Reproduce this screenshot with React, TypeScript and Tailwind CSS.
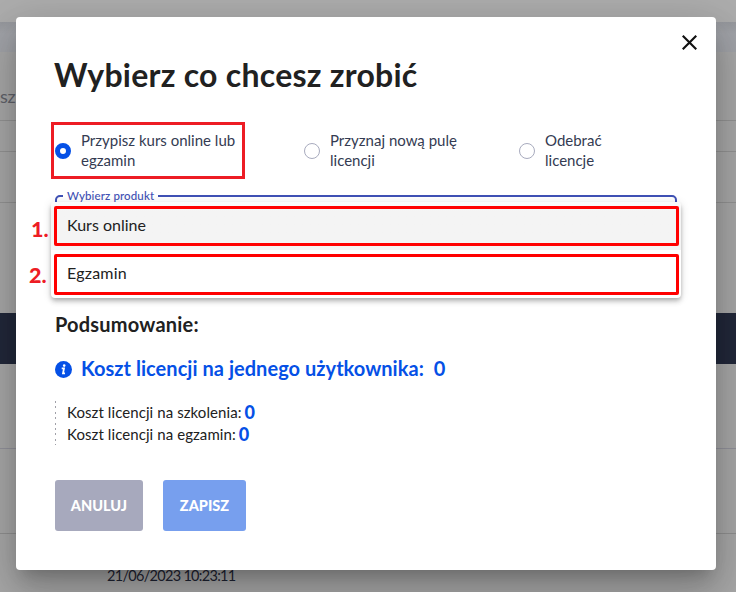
import React, { useState } from 'react'

const options = [
  { id: 'assign', lines: ['Przypisz kurs online lub', 'egzamin'], width: 'w-[249px]' },
  { id: 'grant', lines: ['Przyznaj nową pulę', 'licencji'], width: 'w-[215px]' },
  { id: 'revoke', lines: ['Odebrać', 'licencje'], width: 'w-[120px]' },
]

function Background() {
  return (
    <div className="h-full w-full overflow-hidden bg-[#a8a8a8] text-[#1f2433]">
      <div className="h-[22px] bg-[#adadad]" />
      <div className="h-[30px] bg-linear-to-b from-[#97999e] to-[#a2a4a9] to-40%" />
      <div className="flex h-[69px] items-end border-b border-[#939393] pb-[14px]">
        <span className="text-[18px] leading-5 tracking-[-0.3px] text-[#60626a]">sz</span>
      </div>
      <div className="h-[31px] border-b border-[#939393]" />
      <div className="h-[51px] border-b border-[#939393]" />
      <div className="h-[110px]" />
      <div className="h-[51px] bg-[#22283a]" />
      <div className="h-[85px] border-b border-[#92929b]" />
      <div className="h-[85px] border-b border-[#909090]" />
      <div className="pl-[107px] pt-[32px] text-[14.5px] leading-5 tracking-[-0.7px]">21/06/2023 10:23:11</div>
    </div>
  )
}

function ProductMenu() {
  return (
    <div className="absolute left-[35px] top-[185px] flex h-24 w-[630px] flex-col rounded bg-white shadow-[0_2px_4px_-1px_rgba(0,0,0,0.2),0_4px_5px_0_rgba(0,0,0,0.14),0_1px_10px_0_rgba(0,0,0,0.12)]">
      <div className="flex h-12 rounded-t bg-linear-to-b from-[#fafafa] to-[#f4f4f4] to-20% pb-1 pl-[3px] pr-[2px] pt-1">
        <div className="flex flex-1 items-center rounded-[2px] border-3 border-[#ff0000] pb-[2px] pl-[10px] text-base">Kurs online</div>
      </div>
      <div className="flex h-12 pb-[3px] pl-[3px] pr-[2px] pt-1">
        <div className="flex flex-1 items-center rounded-[2px] border-3 border-[#ff0000] pb-[3px] pl-[10px] text-base">
          <span className="tracking-[0.2px]">Egzamin</span>
        </div>
      </div>
      <span className="absolute -left-[20px] top-[13px] text-[21.5px] font-black leading-7 text-[#ed1c24]">1.</span>
      <span className="absolute -left-[22px] top-[59px] text-[21.5px] font-black leading-7 text-[#ed1c24]">2.</span>
    </div>
  )
}

function App() {
  const [selected, setSelected] = useState('assign')

  return (
    <div className="relative h-[592px] w-[736px] overflow-hidden font-[Lato,sans-serif]">
      <Background />

      <div className="absolute left-4 top-[17px] flex h-[553px] w-[700px] flex-col rounded bg-white px-[39px] pt-[38px] text-[#212121] shadow-[0_11px_15px_-7px_rgba(0,0,0,0.2),0_24px_38px_3px_rgba(0,0,0,0.14),0_9px_46px_8px_rgba(0,0,0,0.12)]">
        <button className="absolute right-[19px] top-[18px]">
          <svg width="15" height="15" viewBox="0 0 14 14" stroke="#111" strokeWidth="2" fill="none">
            <path d="M0.7 0.7 13.3 13.3M13.3 0.7 0.7 13.3" />
          </svg>
        </button>

        <h1 className="-ml-px h-10 whitespace-nowrap text-[32px] font-bold leading-10 tracking-[0.25px]">Wybierz co chcesz zrobić</h1>

        <div className="relative mt-[36px] flex h-10">
          {options.map((option) => (
            <button key={option.id} onClick={() => setSelected(option.id)} className={`flex items-center gap-[10px] text-left ${option.width}`}>
              <span className={selected === option.id
                ? 'h-4 w-4 shrink-0 rounded-full border-5 border-[#0550e6]'
                : 'h-4 w-4 shrink-0 rounded-full border border-[#a8abbe]'} />
              <span className="whitespace-nowrap pb-[2px] text-[15px] leading-5 text-[#343b52]">
                {option.lines[0]}<br />{option.lines[1]}
              </span>
            </button>
          ))}
          <div className="absolute -left-1 -top-[9px] h-[57px] w-[194px] border-3 border-[#ed1c24]" />
        </div>

        {/* Product select */}
        <fieldset className="mt-[16px] h-16 w-[622px] rounded-[5px] border-2 border-[#3f51b5] pl-[6px]">
          <legend className="px-1 pt-px text-[11.5px] font-medium leading-4 tracking-[0.12px] text-[#3f51b5]">Wybierz produkt</legend>
        </fieldset>

        <h2 className="mt-[61px] text-xl font-bold leading-6 tracking-[0.2px]">Podsumowanie:</h2>

        <div className="mt-[20px] flex h-6 items-center text-xl font-bold leading-6 text-[#0550e6]">
          <svg className="mr-[9px] mt-[2px]" width="17" height="17" viewBox="0 0 17 17">
            <circle cx="8.5" cy="8.5" r="8.5" fill="#0550e6" />
            <circle cx="9.2" cy="4.6" r="1.3" fill="#fff" />
            <path d="M6.7 7.3H9L8 12.4h2" fill="none" stroke="#fff" strokeWidth="1.8" />
          </svg>
          <span className="tracking-[0.04px]">Koszt licencji na jednego użytkownika:</span>
          <span className="ml-[10px]">0</span>
        </div>

        <div className="mt-[21px] flex h-11 text-[15px] leading-[22px] tracking-[0.08px]">
          <div className="mr-[11px] w-px bg-[repeating-linear-gradient(to_bottom,#a0a0a8_0,#a0a0a8_2px,transparent_2px,transparent_5.4px)]" />
          <div>
            <div className="flex h-[22px] items-center gap-[3px]"><span>Koszt licencji na szkolenia:</span><b className="text-[18px] font-black text-[#0550e6]">0</b></div>
            <div className="flex h-[22px] items-center gap-[3px]"><span>Koszt licencji na egzamin:</span><b className="text-[18px] font-black text-[#0550e6]">0</b></div>
          </div>
        </div>

        <div className="mt-[35px] flex gap-5 text-[14.5px] font-black text-white">
          <button className="h-[51px] w-[88px] rounded-[3px] bg-[#a7a9bd]">ANULUJ</button>
          <button className="h-[51px] w-[83px] rounded-[3px] bg-[#779fee]">ZAPISZ</button>
        </div>

        <ProductMenu />
      </div>
    </div>
  )
}

export default App
